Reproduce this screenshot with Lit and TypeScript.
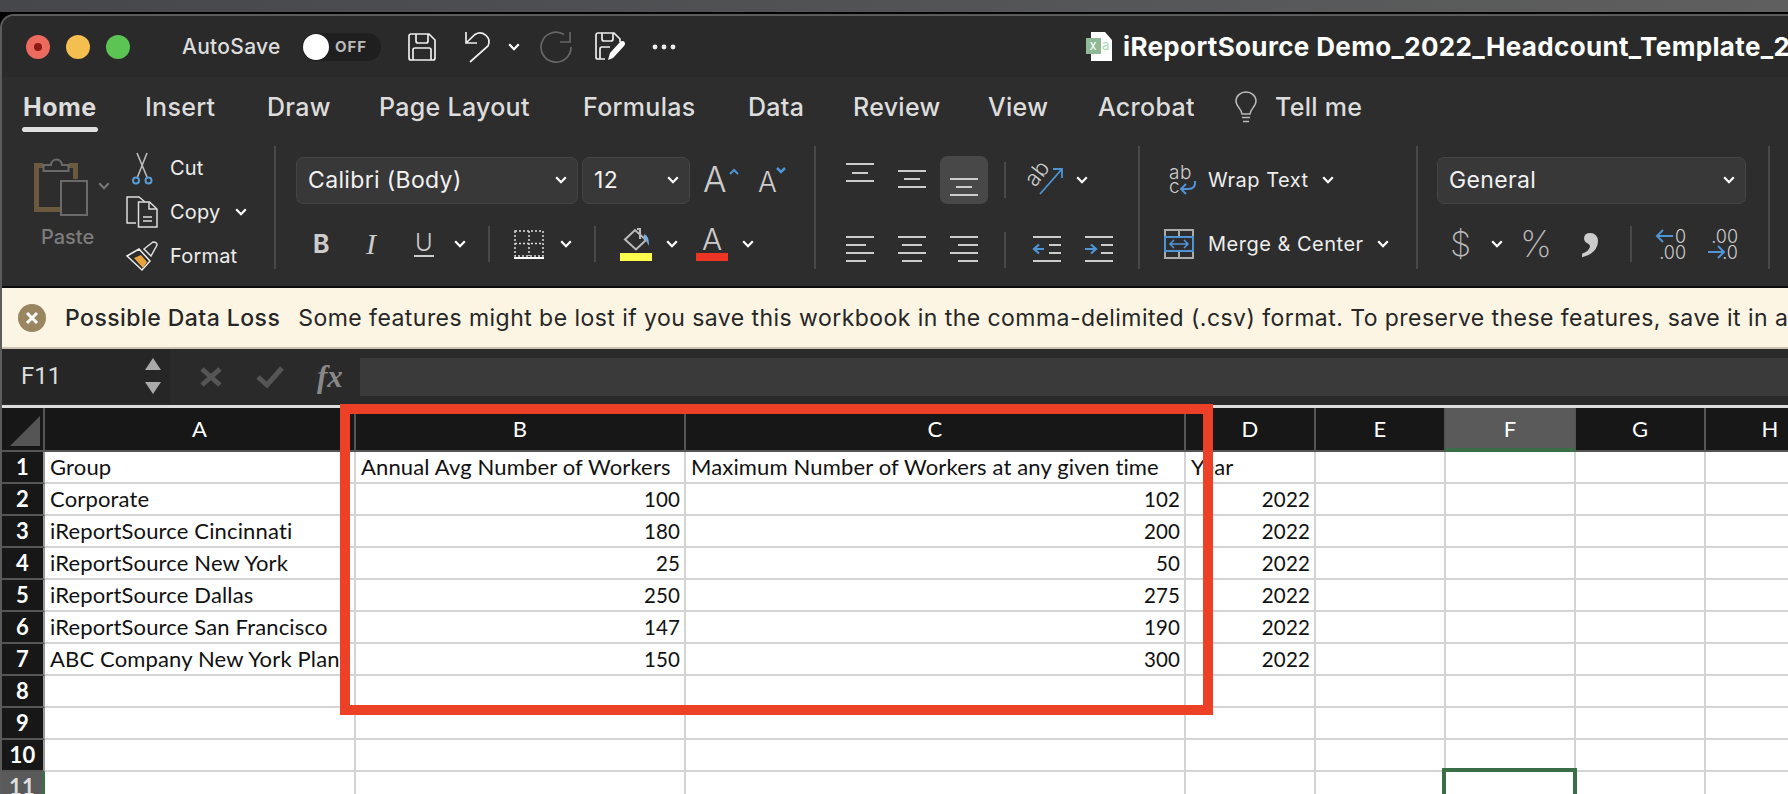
import { LitElement, html, css, svg } from "lit";
import { customElement } from "lit/decorators.js";

const chevron = html`<svg class="chev" width="12" height="8" viewBox="0 0 12 8"><polyline points="1.2,1.2 6,6.2 10.8,1.2" fill="none" stroke="#fff" stroke-width="2.2"/></svg>`;

// horizontal bars for the alignment buttons: [x1, x2, y]
const bars = (rows: number[][]) => html`<svg width="48" height="48" viewBox="0 0 48 48">
  ${rows.map(([a, b, y]) => svg`<line x1=${a} x2=${b} y1=${y} y2=${y} stroke="#ccc" stroke-width="2"/>`)}
</svg>`;

const ROWS: string[][] = [
  ["Group", "Annual Avg Number of Workers", "Maximum Number of Workers at any given time", "Year"],
  ["Corporate", "100", "102", "2022"],
  ["iReportSource Cincinnati", "180", "200", "2022"],
  ["iReportSource New York", "25", "50", "2022"],
  ["iReportSource Dallas", "250", "275", "2022"],
  ["iReportSource San Francisco", "147", "190", "2022"],
  ["ABC Company New York Plant", "150", "300", "2022"],
];

const COLS = ["A", "B", "C", "D", "E", "F", "G", "H"];

@customElement("app-root")
export class AppRoot extends LitElement {
  static styles = css`
    :host {
      display: block;
      position: relative;
      width: 1788px;
      height: 794px;
      overflow: hidden;
      background: #000;
      font-family: Inter, Roboto, "Noto Sans", sans-serif;
    }
    .desk {
      height: 12px;
      background: linear-gradient(90deg, #45474b, #5f5f5f);
    }
    .window {
      margin-top: 2px;
      border-top: 2px solid #5c5c5c;
      border-left: 2px solid #5c5c5c;
      border-top-left-radius: 14px;
      overflow: hidden;
      background: #2a2a2a;
    }
    svg { display: block; flex: none; overflow: visible; }

    /* title bar */
    .titlebar {
      height: 61px;
      display: flex;
      align-items: center;
      padding-left: 24px;
      background: #2a2a2a;
      white-space: nowrap;
    }
    .light { width: 24px; height: 24px; border-radius: 50%; margin-right: 16px; flex: none; }
    .red { background: #ec6a5e; display: flex; align-items: center; justify-content: center; }
    .red i { width: 8px; height: 8px; border-radius: 50%; background: #8c1a10; }
    .yellow { background: #f4bf4f; }
    .green { background: #5cc453; }
    .autosave { margin-left: 36px; width: 120px; flex: none; color: #ddd; font-size: 21px; font-weight: 500; letter-spacing: 0.3px; }
    .toggle {
      width: 79px; height: 28px; border-radius: 14px; background: #1f1f1f; flex: none;
      display: flex; align-items: center; color: #bbb; font-size: 15px; font-weight: 700; letter-spacing: 1px;
    }
    .toggle i { width: 26px; height: 26px; margin: 0 6px 0 1px; border-radius: 50%; background: #fff; }
    .i-save { margin-left: 27px; }
    .i-undo { margin-left: 28px; }
    .i-chev { margin-left: 18px; }
    .i-redo { margin-left: 20px; }
    .i-edit { margin-left: 23px; }
    .dots { margin-left: 27px; }
    .doc { margin-left: 410px; }
    .filename { margin-left: 10px; color: #fff; font-size: 26px; font-weight: 700; letter-spacing: 0.35px; }

    /* tabs */
    .tabs {
      height: 69px;
      display: grid;
      grid-template-columns: 122px 122px 112px 204px 165px 105px 135px 110px 137px 40px auto;
      align-items: start;
      padding-left: 21px;
      background: #2d2d2d;
      color: #ddd;
      font-size: 25px;
      font-weight: 500;
      letter-spacing: 0.3px;
      white-space: nowrap;
    }
    .tabs > * { margin-top: 15px; line-height: 30px; justify-self: start; }
    .tab-on { position: relative; font-weight: 700; letter-spacing: 0.5px; }
    .tab-on::after {
      content: ""; position: absolute; left: -1px; right: -1px; top: 35px; height: 5px;
      border-radius: 3px; background: #e0e0e0;
    }

    /* ribbon */
    .ribbon {
      height: 140px;
      display: flex;
      align-items: flex-start;
      background: #2d2d2d;
      color: #eee;
      font-size: 20px;
      white-space: nowrap;
    }
    .sep { width: 2px; height: 123px; background: #484848; flex: none; }
    .group { height: 123px; flex: none; box-sizing: border-box; }
    .g-clip { width: 272px; padding: 7px 0 0 32px; display: flex; }
    .g-font { width: 538px; padding: 10px 0 0 20px; }
    .g-align { width: 322px; padding: 10px 0 0 20px; }
    .g-wrap { width: 276px; padding: 10px 0 0 24px; }
    .g-num { width: 350px; padding: 10px 0 0 19px; }
    .r1, .r2 { display: grid; align-items: center; justify-items: start; }
    .r1 { height: 48px; margin-bottom: 22px; }
    .r2 { height: 36px; }
    .vsep { width: 2px; height: 36px; background: #484848; }

    .paste { width: 92px; display: grid; grid-template-columns: 64px auto; align-items: center; padding-top: 3px; }
    .paste .chev polyline { stroke: #777; }
    .paste-label { grid-column: 1 / 3; color: #7c7c7c; font-size: 20px; font-weight: 500; padding-left: 7px; margin-top: 9px; }
    .cliplist { display: grid; grid-template-columns: 44px auto; grid-auto-rows: 30px; row-gap: 14px; align-items: center; letter-spacing: 0.2px; }
    .withchev { display: flex; align-items: center; gap: 14px; }

    .select {
      height: 47px; box-sizing: border-box; border: 1px solid #444; border-radius: 7px; background: #383838;
      display: flex; align-items: center; justify-content: space-between; padding: 0 10px 0 11px;
      font-size: 23px; letter-spacing: 0.35px; color: #f2f2f2;
    }
    .s-font { width: 282px; }
    .s-size { width: 108px; }
    .s-num { width: 309px; }
    .f1 { grid-template-columns: 286px 122px 55px auto; }
    .f2 { padding-left: 17px; grid-template-columns: 53px 48px 40px 34px 26px 46px 34px 26px 46px 30px 46px auto; }
    .b { color: #ccc; font-size: 25px; font-weight: 700; }
    .i { color: #ccc; font: italic 300 30px "Liberation Serif", serif; }
    .u { color: #ccc; font-size: 24px; font-weight: 300; border-bottom: 2px solid #ccc; line-height: 24px; padding: 0 1px; }
    .swatch { display: flex; flex-direction: column; gap: 2px; width: 32px; }
    .swatch span { height: 8px; }
    .sw-y { background: #ffff4d; }
    .sw-r { background: #ee3524; }
    .a1 { grid-template-columns: 52px 52px 64px 25px 47px auto; }
    .a2 { grid-template-columns: 52px 52px 64px 28px 52px auto; }
    .on { background: #484848; border-radius: 7px; }

    .w-row { display: grid; grid-template-columns: 44px auto; align-items: center; justify-items: start; letter-spacing: 0.5px; }
    .w-row svg.w-ic { margin-left: 5px; }
    .w-t1 { width: 140px; }
    .w-t2 { width: 190px; }
    .w-row .withchev { gap: 13px; }
    .n2 { padding-left: 15px; grid-template-columns: 39px 32px 60px 47px 25px 52px auto; }
    .dollar { color: #bbb; font-size: 34px; font-weight: 200; line-height: 36px; margin-left: -2px; }
    .pct { color: #bbb; font-size: 36px; font-weight: 200; line-height: 36px; margin-left: -3px; }
    .comma { color: #ccc; font: 700 80px/36px "Liberation Serif", serif; height: 36px; transform: translate(-2px, -26px); }

    /* warning */
    .notice {
      height: 63px;
      box-sizing: border-box;
      border-top: 2px solid #0d0d0d;
      border-bottom: 2px solid #cbc4b4;
      background: #fdf5e3;
      display: flex;
      align-items: center;
      padding-left: 16px;
      color: #262626;
      font-size: 23px;
      white-space: nowrap;
      letter-spacing: 0.45px;
    }
    .notice b { margin: 0 18px 0 19px; font-weight: 500; }

    /* formula bar */
    .formula { height: 56px; display: flex; background: #2a2a2a; color: #ddd; }
    .namebox {
      width: 168px; height: 54px; flex: none; background: #262626;
      display: flex; align-items: center; justify-content: space-between; padding: 0 9px 0 19px; box-sizing: border-box;
      font: 24px Roboto, sans-serif;
    }
    .fx-btns { width: 190px; flex: none; display: flex; align-items: center; padding-left: 30px; box-sizing: border-box; }
    .check { margin-left: 34px; }
    .fx { margin-left: 33px; color: #888; font: italic 700 31px "Liberation Serif", serif; }
    .input { flex: 1; height: 38px; margin-top: 9px; background: #3a3a3a; }

    /* sheet */
    .gridline { height: 3px; background: #ddd; }
    .sheet {
      display: grid;
      grid-template-columns: 43px 311px 330px 500px repeat(5, 130px);
      grid-template-rows: 44px;
      grid-auto-rows: 32px;
      background: #fff;
      color: #111;
      font-family: Lato, "Noto Sans", sans-serif;
      font-size: 22px;
      letter-spacing: 0.15px;
    }
    .sheet > div {
      box-sizing: border-box;
      border-right: 2px solid #d4d4d4;
      border-bottom: 2px solid #d4d4d4;
      white-space: nowrap;
      line-height: 30px;
      padding: 0 5px;
      position: relative;
    }
    .corner, .colh, .rowh { background: #171717 !important; color: #fff; text-align: center; }
    .sheet > .corner, .sheet > .colh { border-color: #555; line-height: 42px; }
    .sheet > .rowh { border-bottom-color: #555; border-right-color: #999; font-size: 22px; font-weight: 700; padding: 0; }
    .sheet > .corner { padding: 8px 0 0 8px; }
    .sheet > .colh.cur { background: #5a5a5a !important; border-bottom: 4px solid #3a6e46; }
    .sheet > .rowh.cur { background: #5a5a5a !important; border-right: 3px solid #3a6e46; color: #ddd; }
    .sheet > .num { text-align: right; font-size: 20.5px; padding-right: 4px; }
    .sel::after {
      content: ""; position: absolute; left: -4px; right: -3px; top: -4px; bottom: -4px;
      border: 4px solid #3a6e46;
    }
    .callout {
      position: absolute;
      left: 340px; top: 404px; width: 873px; height: 311px;
      box-sizing: border-box;
      border: 10px solid #ec4126;
      pointer-events: none;
    }
  `;

  private renderRibbon() {
    return html`<div class="ribbon">
      <div class="group g-clip">
        <div>
          <div class="paste">
            <svg width="54" height="60" viewBox="0 0 54 60" fill="none">
              <path d="M9 9.5H2.5V53.5H26M35 9.5h6.5V23" stroke="#6b5a3e" stroke-width="5"/>
              <path d="M9.500 15V9h7.500a5.500 5.500 0 0 1 11 0h6.500v6z" stroke="#6a6a6a" stroke-width="2" fill="#2d2d2d"/>
              <rect x="27" y="25" width="26" height="34" stroke="#6a6a6a" stroke-width="2" fill="#2d2d2d"/>
            </svg>
            ${chevron}
            <div class="paste-label">Paste</div>
          </div>
        </div>
        <div class="cliplist">
          <svg width="32" height="31" viewBox="0 0 32 31" fill="none">
            <path d="M11 0l10 24M21 0L11.500 24" stroke="#bbb" stroke-width="1.600"/>
            <circle cx="10" cy="27.500" r="3" stroke="#5b9bd5" stroke-width="2"/>
            <circle cx="22.500" cy="27.500" r="3" stroke="#5b9bd5" stroke-width="2"/>
          </svg>
          <span>Cut</span>
          <svg width="32" height="32" viewBox="0 0 32 32" fill="none" stroke="#ddd" stroke-width="1.500">
            <path d="M10 27H1V1h12l6 5"/>
            <path d="M12.500 6h11l7.500 7v18H12.500z"/>
            <path d="M23 6v7h8M17 21h9M17 25h9"/>
          </svg>
          <span class="withchev">Copy ${chevron}</span>
          <svg width="32" height="30" viewBox="0 0 32 30" fill="none">
            <path d="M1 15l12-7 11 12-8 9z" stroke="#eee" stroke-width="1.500" fill="#2d2d2d"/>
            <path d="M8 17l9 10 4-6-6-7z" fill="#e8a33d"/>
            <path d="M18 8l9-7q4 0 4 3l-6 11z" stroke="#ddd" stroke-width="1.500" fill="#2d2d2d"/>
          </svg>
          <span>Format</span>
        </div>
      </div>
      <div class="sep"></div>

      <div class="group g-font">
        <div class="r1 f1">
          <div class="select s-font">Calibri (Body) ${chevron}</div>
          <div class="select s-size">12 ${chevron}</div>
          <svg width="36" height="28" viewBox="0 0 36 28">
            <text x="-1" y="26" font-size="35" font-weight="300" font-family="Inter" fill="#ccc">A</text>
            <path d="M26 8l4-4 4 4" fill="none" stroke="#4f94d4" stroke-width="2"/>
          </svg>
          <svg width="32" height="28" viewBox="0 0 32 28">
            <text x="-1" y="26" font-size="28" font-weight="300" font-family="Inter" fill="#ccc">A</text>
            <path d="M18 2l4 4 4-4" fill="none" stroke="#4f94d4" stroke-width="2.500"/>
          </svg>
        </div>
        <div class="r2 f2">
          <span class="b">B</span>
          <span class="i">I</span>
          <span class="u">U</span>
          ${chevron}
          <div class="vsep"></div>
          <svg width="30" height="29" viewBox="0 0 30 29" fill="none" stroke="#ddd" stroke-width="1.500">
            <path d="M1 1h28v25H1zM15 1v25M1 13.500h28" stroke-dasharray="2 2"/>
            <path d="M0 28h30" stroke="#fff" stroke-width="2"/>
          </svg>
          ${chevron}
          <div class="vsep"></div>
          <div class="swatch">
            <svg width="32" height="24" viewBox="0 0 32 24" fill="none">
              <path d="M5 12.500L15 3l11 10-10 9.500z" stroke="#bbb" stroke-width="2"/>
              <path d="M17 2h3v10" stroke="#bbb" stroke-width="2"/>
              <path d="M24 7q5 1 5 12-3-6-5-7z" fill="#79aee0"/>
            </svg>
            <span class="sw-y"></span>
          </div>
          ${chevron}
          <div class="swatch">
            <svg width="32" height="24" viewBox="0 0 32 24">
              <text x="16" y="23" text-anchor="middle" font-size="30" font-weight="300" font-family="Inter" fill="#ccc">A</text>
            </svg>
            <span class="sw-r"></span>
          </div>
          ${chevron}
        </div>
      </div>
      <div class="sep"></div>

      <div class="group g-align">
        <div class="r1 a1">
          ${bars([[10, 38, 8], [16, 32, 17], [10, 38, 25]])}
          ${bars([[10, 38, 15], [16, 32, 23], [10, 38, 31]])}
          <div class="on">${bars([[10, 38, 23], [16, 32, 31], [10, 38, 39]])}</div>
          <div class="vsep"></div>
          <svg width="36" height="30" viewBox="0 0 36 30">
            <text transform="translate(6 23) rotate(-52)" font-size="22" font-weight="300" font-family="Inter" fill="#ccc">ab</text>
            <path d="M11 29L33 4M24 4h9v9" fill="none" stroke="#4f94d4" stroke-width="1.800"/>
          </svg>
          ${chevron}
        </div>
        <div class="r2 a2">
          ${bars([[10, 38, 11], [10, 30, 19], [10, 38, 27], [10, 30, 35]])}
          ${bars([[10, 38, 11], [14, 34, 19], [10, 38, 27], [14, 34, 35]])}
          ${bars([[10, 38, 11], [18, 38, 19], [10, 38, 27], [18, 38, 35]])}
          <div class="vsep"></div>
          <svg width="30" height="30" viewBox="0 0 30 30">
            <path d="M1 2h28M17 10h12M17 18h12M1 26h28" stroke="#ccc" stroke-width="2"/>
            <path d="M12 14H2M7 9.500L2 14l5 4.500" fill="none" stroke="#4f94d4" stroke-width="2.200"/>
          </svg>
          <svg width="30" height="30" viewBox="0 0 30 30">
            <path d="M1 2h28M17 10h12M17 18h12M1 26h28" stroke="#ccc" stroke-width="2"/>
            <path d="M1 14h10M7 9.500L12 14l-5 4.500" fill="none" stroke="#4f94d4" stroke-width="2.200"/>
          </svg>
        </div>
      </div>
      <div class="sep"></div>

      <div class="group g-wrap">
        <div class="r1 w-row">
          <svg class="w-ic" width="28" height="30" viewBox="0 0 28 30">
            <text x="0" y="14" font-size="19" font-weight="300" font-family="Inter" fill="#ccc">ab</text>
            <text x="0" y="28" font-size="19" font-weight="300" font-family="Inter" fill="#ccc">c</text>
            <path d="M26 16q1 8-7 8h-6M17 19l-5 5 5 5" fill="none" stroke="#4f94d4" stroke-width="2"/>
          </svg>
          <div class="withchev w-t1">Wrap Text ${chevron}</div>
        </div>
        <div class="r2 w-row">
          <svg width="30" height="30" viewBox="0 0 30 30" fill="none">
            <path d="M1 1h28v28H1zM1 8h28M1 22h28M15 1v7M15 22v7" stroke="#aaa" stroke-width="2"/>
            <rect x="1" y="8" width="28" height="14" stroke="#4f94d4" stroke-width="2"/>
            <path d="M6 15h18M10 11l-4 4 4 4M20 11l4 4-4 4" stroke="#4f94d4" stroke-width="1.600"/>
          </svg>
          <div class="withchev w-t2">Merge &amp; Center ${chevron}</div>
        </div>
      </div>
      <div class="sep"></div>

      <div class="group g-num">
        <div class="r1">
          <div class="select s-num">General ${chevron}</div>
        </div>
        <div class="r2 n2">
          <span class="dollar">$</span>
          ${chevron}
          <span class="pct">%</span>
          <span class="comma">,</span>
          <div class="vsep"></div>
          <svg width="32" height="32" viewBox="0 0 32 32">
            <text x="31" y="15" text-anchor="end" font-size="18" font-weight="300" font-family="Inter" fill="#ccc">0</text>
            <text x="31" y="31" text-anchor="end" font-size="18" font-weight="300" font-family="Inter" fill="#ccc">.00</text>
            <path d="M18 8H2M8 2L2 8l6 6" fill="none" stroke="#4f94d4" stroke-width="2"/>
          </svg>
          <svg width="32" height="32" viewBox="0 0 32 32">
            <text x="31" y="15" text-anchor="end" font-size="18" font-weight="300" font-family="Inter" fill="#ccc">.00</text>
            <text x="31" y="31" text-anchor="end" font-size="18" font-weight="300" font-family="Inter" fill="#ccc">.0</text>
            <path d="M1 24h16M11 18l6 6-6 6" fill="none" stroke="#4f94d4" stroke-width="2"/>
          </svg>
        </div>
      </div>
      <div class="sep"></div>
    </div>`;
  }

  private renderSheet() {
    return html`<div class="gridline"></div>
      <div class="sheet">
        <div class="corner">
          <svg width="30" height="30" viewBox="0 0 30 30"><polygon points="0,30 30,30 30,0" fill="#555"/></svg>
        </div>
        ${COLS.map((c) => html`<div class="colh ${c === "F" ? "cur" : ""}">${c}</div>`)}
        ${Array.from({ length: 11 }, (_, r) => html`
          <div class="rowh ${r === 10 ? "cur" : ""}">${r + 1}</div>
          ${COLS.map((_c, c) => {
            const v = ROWS[r]?.[c] ?? "";
            const isNum = r > 0 && c > 0 && c < 4;
            const sel = r === 10 && c === 5;
            return html`<div class="${isNum ? "num" : ""} ${sel ? "sel" : ""}">${v}</div>`;
          })}
        `)}
      </div>`;
  }

  render() {
    return html`
      <div class="desk"></div>
      <div class="window">
        <div class="titlebar">
          <div class="light red"><i></i></div>
          <div class="light yellow"></div>
          <div class="light green"></div>
          <div class="autosave">AutoSave</div>
          <div class="toggle"><i></i>OFF</div>
          <svg class="i-save" width="28" height="28" viewBox="0 0 28 28" fill="none" stroke="#eee" stroke-width="1.700">
            <path d="M3 1h18l6 6v18a2 2 0 0 1-2 2H3a2 2 0 0 1-2-2V3a2 2 0 0 1 2-2z"/>
            <path d="M8 1v7a2 2 0 0 0 2 2h8a2 2 0 0 0 2-2V1M5 27V17a2 2 0 0 1 2-2h14a2 2 0 0 1 2 2v10"/>
          </svg>
          <svg class="i-undo" width="26" height="32" viewBox="0 0 26 32" fill="none" stroke="#eee" stroke-width="1.700">
            <path d="M2 1v11h11M2 12L11 3.500C18 -1 28 6 24 15L6 31"/>
          </svg>
          <svg class="i-chev" width="12" height="8" viewBox="0 0 12 8"><polyline points="1.2,1.2 6,6.2 10.8,1.2" fill="none" stroke="#fff" stroke-width="2.2"/></svg>
          <svg class="i-redo" width="32" height="32" viewBox="0 0 32 32" fill="none" stroke="#666" stroke-width="1.700">
            <path d="M31 16A15 15 0 1 1 24 3.500"/>
            <path d="M30 1v10H20"/>
          </svg>
          <svg class="i-edit" width="30" height="29" viewBox="0 0 30 29" fill="none" stroke="#eee" stroke-width="1.700">
            <path d="M10 27H3a2 2 0 0 1-2-2V3a2 2 0 0 1 2-2h16l6 6v3"/>
            <path d="M7 1v6a2 2 0 0 0 2 2h7a2 2 0 0 0 2-2V1M5 27V17a2 2 0 0 1 2-2h8"/>
            <path d="M13 28l2-7L25 10q3-2 4.500 0t-.5 4L18 26z" fill="#fff" stroke="none"/>
          </svg>
          <svg class="dots" width="24" height="6" viewBox="0 0 24 6" fill="#eee">
            <circle cx="3" cy="3" r="2.400"/><circle cx="12" cy="3" r="2.400"/><circle cx="21" cy="3" r="2.400"/>
          </svg>
          <svg class="doc" width="27" height="30" viewBox="0 0 27 30">
            <path d="M5 0h14l7 8v21H5z" fill="#fff"/>
            <rect x="0" y="6" width="15" height="16" fill="#8fb996"/>
            <text x="3.500" y="18" font-size="13" font-family="Inter" fill="#fff">x</text>
            <text x="16" y="18" font-size="13" font-family="Inter" fill="#a8dcb4">a</text>
          </svg>
          <div class="filename">iReportSource Demo_2022_Headcount_Template_2022</div>
        </div>

        <div class="tabs">
          <span class="tab-on">Home</span>
          <span>Insert</span>
          <span>Draw</span>
          <span>Page Layout</span>
          <span>Formulas</span>
          <span>Data</span>
          <span>Review</span>
          <span>View</span>
          <span>Acrobat</span>
          <svg width="22" height="31" viewBox="0 0 22 31" fill="none" stroke="#bbb" stroke-width="1.500">
            <path d="M7 22c0-5-6-7-6-13a10 9 0 0 1 20 0c0 6-6 8-6 13z"/>
            <path d="M7 25.500h8M8 29.500h6"/>
          </svg>
          <span>Tell me</span>
        </div>

        ${this.renderRibbon()}

        <div class="notice">
          <svg width="28" height="28" viewBox="0 0 28 28">
            <circle cx="14" cy="14" r="14" fill="#9a8561"/>
            <path d="M9 9l10 10M19 9L9 19" stroke="#fff" stroke-width="3"/>
          </svg>
          <b>Possible Data Loss</b>
          Some features might be lost if you save this workbook in the comma-delimited (.csv) format. To preserve these features, save it in an Excel file format.
        </div>

        <div class="formula">
          <div class="namebox">
            F11
            <svg width="16" height="36" viewBox="0 0 16 36" fill="#aaa">
              <polygon points="8,0 16,12 0,12"/><polygon points="0,24 16,24 8,36"/>
            </svg>
          </div>
          <div class="fx-btns">
            <svg width="22" height="20" viewBox="0 0 22 20"><path d="M2 2l18 16M20 2L2 18" stroke="#555" stroke-width="5"/></svg>
            <svg class="check" width="28" height="22" viewBox="0 0 28 22"><path d="M2 11l9 8L26 2" fill="none" stroke="#555" stroke-width="5"/></svg>
            <span class="fx">fx</span>
          </div>
          <div class="input"></div>
        </div>

        ${this.renderSheet()}
      </div>
      <div class="callout"></div>
    `;
  }
}
